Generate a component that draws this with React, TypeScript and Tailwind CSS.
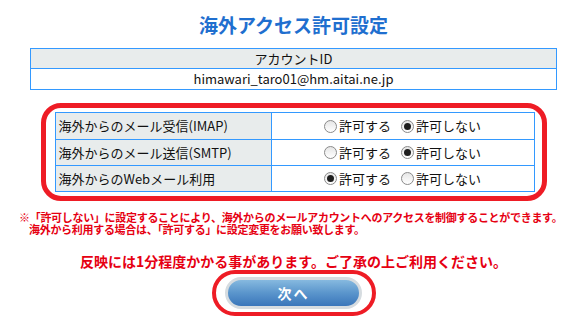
const jp = "font-['Noto_Sans_CJK_JP','Noto_Sans',sans-serif]";

function Radio({ checked }: { checked: boolean }) {
  return (
    <span className="inline-flex items-center justify-center w-[13px] h-[13px] rounded-full border border-[#8a8a8a] bg-gradient-to-b from-[#e6e6e6] to-white">
      {checked && <span className="w-[7px] h-[7px] rounded-full bg-[#1e1e1e]" />}
    </span>
  );
}

function Choice({ allow }: { allow: boolean }) {
  return (
    <div className="flex items-center justify-center gap-[10px] text-[13px] text-[#111]">
      <label className="flex items-center gap-[2px]">
        <Radio checked={allow} />
        <span>許可する</span>
      </label>
      <label className="flex items-center gap-[2px]">
        <Radio checked={!allow} />
        <span>許可しない</span>
      </label>
    </div>
  );
}

const rows = [
  { label: '海外からのメール受信(IMAP)', allow: false },
  { label: '海外からのメール送信(SMTP)', allow: false },
  { label: '海外からのWebメール利用', allow: true },
];

export default function App() {
  return (
    <div className={`w-[587px] h-[321px] bg-white flex flex-col items-center overflow-hidden ${jp}`}>
      <h1 className="mt-[12px] text-[19px] leading-[26px] font-bold text-[#1f6fcf]">海外アクセス許可設定</h1>

      <div className="mt-[10px] w-[527px] border border-[#3399ff] text-[13px] text-[#111]">
        <div className="h-[20px] flex items-center justify-center bg-[#e8ecec] border-b border-[#3399ff]">アカウントID</div>
        <div className="h-[20px] flex items-center justify-center">himawari_taro01@hm.aitai.ne.jp</div>
      </div>

      <div className="mt-[13px] w-[506px] border-[5px] border-[#ee1c25] rounded-[20px] pt-[4px] pb-[4px] pl-[9px] pr-[7px]">
        <div className="w-[480px] border border-[#3399ff]">
          {rows.map((r, i) => (
            <div key={r.label} className={`grid grid-cols-[216px_1fr] h-[26px] ${i > 0 ? 'border-t border-[#3399ff]' : ''}`}>
              <div className="flex items-center pl-[3px] bg-[#e8ecec] border-r border-[#3399ff] text-[13px] text-[#111]">{r.label}</div>
              <Choice allow={r.allow} />
            </div>
          ))}
        </div>
      </div>

      <div className="mt-[10px] w-[549px] text-[11px] leading-[12px] font-bold text-[#e60012] tracking-[-0.3px] whitespace-nowrap">
        <p>※「許可しない」に設定することにより、海外からのメールアカウントへのアクセスを制御することができます。</p>
        <p className="pl-[10px]">海外から利用する場合は、「許可する」に設定変更をお願い致します。</p>
      </div>

      <p className="mt-[18px] text-[14px] leading-[16px] font-bold text-[#e60012]">反映には1分程度かかる事があります。ご了承の上ご利用ください。</p>

      <div className="mt-[1px] w-[164px] h-[46px] rounded-full border-[4px] border-[#ee1c25] flex items-center justify-center">
        <button className="w-[137px] h-[32px] rounded-full border-[3px] border-[#d6dce0] bg-gradient-to-b from-[#86b9df] via-[#5a95cc] to-[#3a76ba] text-white text-[14px] font-bold tracking-[2px]">
          次へ
        </button>
      </div>
    </div>
  );
}
